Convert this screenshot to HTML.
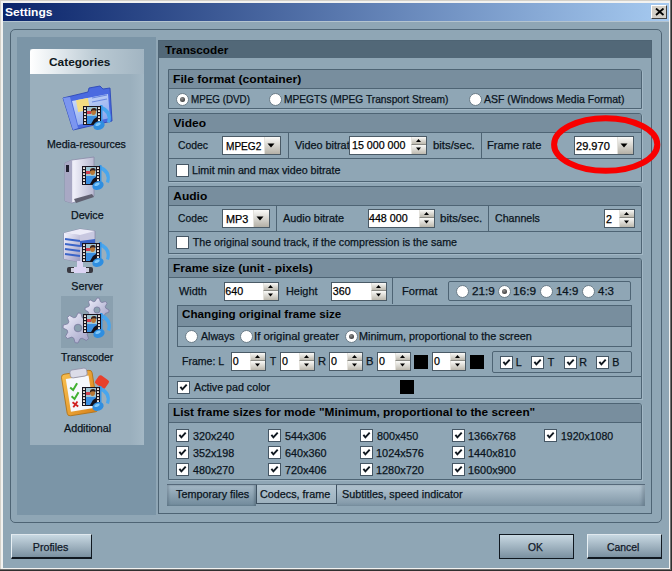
<!DOCTYPE html><html><head><meta charset="utf-8"><style>
*{margin:0;padding:0;box-sizing:border-box}
html,body{width:672px;height:571px;overflow:hidden;background:#d4d0c8}
body{position:relative;font-family:"Liberation Sans", sans-serif}
body div{position:absolute}
.t{white-space:nowrap;line-height:1;transform-origin:0 0}
.cb{width:13px;height:13px;background:#fff;border:1px solid #455664}
.cb svg{position:absolute;left:0;top:0}
.rd{width:13px;height:13px;border-radius:50%;background:#fff;border:1px solid #6a7c88}
.rd .dot{left:3px;top:3px;width:5px;height:5px;border-radius:50%;background:radial-gradient(circle at 40% 35%,#909090,#202020)}
.ed{background:#fff;border:1px solid #4a5a66}
.sp{right:0;width:15px;background:linear-gradient(#fafaf8,#bdb9ae);border-left:1px solid #e4e2dc}
.sp svg{position:absolute;left:0;top:0}
.sp2{border-top:1px solid #8a8a84}
.up{left:3px;top:2px;width:0;height:0;border-left:3px solid transparent;border-right:3px solid transparent;border-bottom:3px solid #000}
.sp .dn{left:3px;top:2px;width:0;height:0;border-left:3px solid transparent;border-right:3px solid transparent;border-top:3px solid #000}
.cbtn{right:0;top:0;bottom:0;width:16px;background:linear-gradient(#fafaf8,#b4b0a6);border-left:1px solid #e4e2dc}
.cbtn svg{position:absolute;left:0;top:0}
.cbtn .dn{left:2px;top:6px;width:0;height:0;border-left:4px solid transparent;border-right:4px solid transparent;border-top:4px solid #000}
.btn{background:linear-gradient(#c8d8e2,#7a90a0);border-left:1px solid #e8f0f4;border-top:1px solid #e0e8ee;border-right:1px solid #101820;border-bottom:2px solid #101820}
</style></head><body><div style="left:0px;top:0px;width:672px;height:571px;background:#303030"></div>
<div style="left:0px;top:0px;width:671px;height:570px;background:#707070"></div>
<div style="left:0px;top:0px;width:670px;height:569px;background:#d4d0c8"></div>
<div style="left:1px;top:1px;width:669px;height:568px;background:#f2f2f0"></div>
<div style="left:3px;top:3px;width:666px;height:18px;background:linear-gradient(90deg,#0a246a,#a6caf0)"></div>
<div class="t" style="left:4.94px;top:6.7px;font-size:12px;font-weight:bold;color:#fff;transform:scale(1.0043,0.900);">Settings</div>
<div style="left:651px;top:5px;width:16px;height:14px;background:#d4d0c8;border-left:1px solid #fff;border-top:1px solid #fff;border-right:1px solid #404040;border-bottom:1px solid #404040"><svg style="position:absolute;left:2.5px;top:2px" width="10" height="8" viewBox="0 0 10 8"><path d="M1 0.5 L8.5 7 M8.5 0.5 L1 7" stroke="#000" stroke-width="1.8"/></svg></div>
<div style="left:3px;top:21px;width:666px;height:547px;background:#8fa6b5"></div>
<div style="left:3px;top:21px;width:666px;height:1px;background:#b4c4d0"></div>
<div style="left:10px;top:29px;width:652px;height:494px;border:1px solid #4e6474;border-radius:5px;background:#8fa6b5"></div>
<div style="left:17px;top:37px;width:139px;height:478px;background:#7b95a7"></div>
<div style="left:30px;top:49px;width:114px;height:396px;background:linear-gradient(90deg,#9aafbd 0%,#9aafbd 88%,#a4b8c5 100%)"></div>
<div style="left:30px;top:49px;width:114px;height:25px;background:linear-gradient(90deg,#ffffff 0%,#e6ecf0 22%,#b8c8d2 60%,#a2b5c2 100%);border-radius:3px 3px 0 0"></div>
<div class="t" style="left:49.02px;top:56px;font-size:11.7px;font-weight:bold;color:#101820;transform:scale(1.0169,1.000);">Categories</div>
<svg style="position:absolute;left:58px;top:80px" width="60" height="54" viewBox="58 80 60 54"><defs><linearGradient id="fg" x1="0" y1="0" x2="1" y2="1"><stop offset="0" stop-color="#9cb8f8"/><stop offset="1" stop-color="#4060d0"/></linearGradient>
    <linearGradient id="sv" x1="0" y1="0" x2="1" y2="0"><stop offset="0" stop-color="#9898b8"/><stop offset="0.3" stop-color="#f0f0fa"/><stop offset="1" stop-color="#b8b8d0"/></linearGradient>
    <linearGradient id="fi" x1="0" y1="0" x2="0.6" y2="1"><stop offset="0" stop-color="#d4e2fa"/><stop offset="1" stop-color="#8aa6ee"/></linearGradient><linearGradient id="or" x1="0" y1="0" x2="1" y2="1"><stop offset="0" stop-color="#f8c050"/><stop offset="1" stop-color="#d88018"/></linearGradient><linearGradient id="gr" x1="0" y1="0" x2="1" y2="1"><stop offset="0" stop-color="#f4f4ff"/><stop offset="1" stop-color="#9a9ac0"/></linearGradient></defs><path d="M63 98 L88 92 L89 88 L100 86 L103 89 L110 88 L112 121 L73 130 Z" fill="#4a6ae0" stroke="#2c48b8" stroke-width="0.9"/><path d="M72 101 L108 94 L110 118 L78 125 Z" fill="url(#fi)"/><rect x="77" y="99" width="12" height="12" fill="#f4dc80" transform="rotate(-10 83 105)"/><path d="M92 98 L107 95 M92 102 L107 99" stroke="#6a88e0" stroke-width="1.2"/><path d="M63 98 L70 97 L78 128 L73 130 Z" fill="#7c96f0"/><path d="M100 105 Q114 110 110 123 L107 122 Q110 113 100 109 Z" fill="#48a6ee"/><rect x="100" y="105" width="2.5" height="19" fill="#3a96e4"/><rect x="83" y="106" width="18" height="19" fill="#181420"/><rect x="87" y="107" width="10" height="9" fill="#9cc4d4"/><rect x="87" y="111" width="4" height="3" fill="#d04050"/><ellipse cx="93.5" cy="111.5" rx="2.6" ry="3.4" fill="#b87838"/><path d="M91 110 q2.5 -3.5 5.5 -1 l0 2 q-3 -1.5 -5.5 0.5z" fill="#302020"/><rect x="87" y="116" width="10" height="8" fill="#3a8ee0"/><path d="M91 124 l3 -5 l3 -2 v7z" fill="#141018"/><rect x="84" y="107.2" width="2" height="1.8" fill="#f0e8e0"/><rect x="98" y="107.2" width="2" height="1.8" fill="#f0e8e0"/><rect x="84" y="110.2" width="2" height="1.8" fill="#f0e8e0"/><rect x="98" y="110.2" width="2" height="1.8" fill="#f0e8e0"/><rect x="84" y="113.2" width="2" height="1.8" fill="#f0e8e0"/><rect x="98" y="113.2" width="2" height="1.8" fill="#f0e8e0"/><rect x="84" y="116.2" width="2" height="1.8" fill="#f0e8e0"/><rect x="98" y="116.2" width="2" height="1.8" fill="#f0e8e0"/><rect x="84" y="119.2" width="2" height="1.8" fill="#f0e8e0"/><rect x="98" y="119.2" width="2" height="1.8" fill="#f0e8e0"/><rect x="84" y="122.2" width="2" height="1.8" fill="#f0e8e0"/><rect x="98" y="122.2" width="2" height="1.8" fill="#f0e8e0"/><ellipse cx="99" cy="125.5" rx="5.8" ry="4.3" fill="#2f8ee0" transform="rotate(-20 99 125.5)"/><ellipse cx="98" cy="124.3" rx="2.8" ry="1.5" fill="#80c8f8" transform="rotate(-20 98 124.3)"/></svg>
<svg style="position:absolute;left:58px;top:152px" width="60" height="56" viewBox="58 152 60 56"><path d="M65 163 L72 160 L94 157 L94 196 L72 203 L65 201 Z" fill="url(#sv)" stroke="#8a8aa8" stroke-width="0.8"/><path d="M65 163 L72 160 L72 203 L65 201 Z" fill="#a8a8c4"/><rect x="66" y="165" width="3" height="7" fill="#202030"/><path d="M74 199 L92 194 L94 197 L76 203 Z" fill="#606070"/><path d="M99 165 Q113 170 109 183 L106 182 Q109 173 99 169 Z" fill="#48a6ee"/><rect x="99" y="165" width="2.5" height="19" fill="#3a96e4"/><rect x="82" y="166" width="18" height="19" fill="#181420"/><rect x="86" y="167" width="10" height="9" fill="#9cc4d4"/><rect x="86" y="171" width="4" height="3" fill="#d04050"/><ellipse cx="92.5" cy="171.5" rx="2.6" ry="3.4" fill="#b87838"/><path d="M90 170 q2.5 -3.5 5.5 -1 l0 2 q-3 -1.5 -5.5 0.5z" fill="#302020"/><rect x="86" y="176" width="10" height="8" fill="#3a8ee0"/><path d="M90 184 l3 -5 l3 -2 v7z" fill="#141018"/><rect x="83" y="167.2" width="2" height="1.8" fill="#f0e8e0"/><rect x="97" y="167.2" width="2" height="1.8" fill="#f0e8e0"/><rect x="83" y="170.2" width="2" height="1.8" fill="#f0e8e0"/><rect x="97" y="170.2" width="2" height="1.8" fill="#f0e8e0"/><rect x="83" y="173.2" width="2" height="1.8" fill="#f0e8e0"/><rect x="97" y="173.2" width="2" height="1.8" fill="#f0e8e0"/><rect x="83" y="176.2" width="2" height="1.8" fill="#f0e8e0"/><rect x="97" y="176.2" width="2" height="1.8" fill="#f0e8e0"/><rect x="83" y="179.2" width="2" height="1.8" fill="#f0e8e0"/><rect x="97" y="179.2" width="2" height="1.8" fill="#f0e8e0"/><rect x="83" y="182.2" width="2" height="1.8" fill="#f0e8e0"/><rect x="97" y="182.2" width="2" height="1.8" fill="#f0e8e0"/><ellipse cx="98" cy="185.5" rx="5.8" ry="4.3" fill="#2f8ee0" transform="rotate(-20 98 185.5)"/><ellipse cx="97" cy="184.3" rx="2.8" ry="1.5" fill="#80c8f8" transform="rotate(-20 97 184.3)"/></svg>
<svg style="position:absolute;left:58px;top:224px" width="60" height="52" viewBox="58 224 60 52"><path d="M64 233 L80 229 L95 231 L95 258 L80 262 L64 259 Z" fill="#c8c8e0" stroke="#8888a8" stroke-width="0.8"/><path d="M64 233 L80 229 L95 231 L80 235 Z" fill="#ececf8"/><path d="M64 233 L80 235 L80 262 L64 259 Z" fill="url(#gr)"/><path d="M65 239 L80 241" stroke="#3a64c8" stroke-width="2.2" fill="none"/><path d="M65 244 L80 246" stroke="#3a64c8" stroke-width="2.2" fill="none"/><path d="M65 249 L80 251" stroke="#3a64c8" stroke-width="2.2" fill="none"/><path d="M65 254 L80 256" stroke="#3a64c8" stroke-width="2.2" fill="none"/><path d="M80 241 L95 239 L95 245 L80 247 Z" fill="#3a64c8"/><rect x="67" y="267" width="26" height="6" rx="2" fill="#383840"/><rect x="71" y="268" width="18" height="4" fill="#d0d0e0"/><path d="M77 261 h6 v6 h3 v6 h-12 v-6 h3 z" fill="#dcd4f4"/><path d="M99 242 Q113 247 109 260 L106 259 Q109 250 99 246 Z" fill="#48a6ee"/><rect x="99" y="242" width="2.5" height="19" fill="#3a96e4"/><rect x="82" y="243" width="18" height="19" fill="#181420"/><rect x="86" y="244" width="10" height="9" fill="#9cc4d4"/><rect x="86" y="248" width="4" height="3" fill="#d04050"/><ellipse cx="92.5" cy="248.5" rx="2.6" ry="3.4" fill="#b87838"/><path d="M90 247 q2.5 -3.5 5.5 -1 l0 2 q-3 -1.5 -5.5 0.5z" fill="#302020"/><rect x="86" y="253" width="10" height="8" fill="#3a8ee0"/><path d="M90 261 l3 -5 l3 -2 v7z" fill="#141018"/><rect x="83" y="244.2" width="2" height="1.8" fill="#f0e8e0"/><rect x="97" y="244.2" width="2" height="1.8" fill="#f0e8e0"/><rect x="83" y="247.2" width="2" height="1.8" fill="#f0e8e0"/><rect x="97" y="247.2" width="2" height="1.8" fill="#f0e8e0"/><rect x="83" y="250.2" width="2" height="1.8" fill="#f0e8e0"/><rect x="97" y="250.2" width="2" height="1.8" fill="#f0e8e0"/><rect x="83" y="253.2" width="2" height="1.8" fill="#f0e8e0"/><rect x="97" y="253.2" width="2" height="1.8" fill="#f0e8e0"/><rect x="83" y="256.2" width="2" height="1.8" fill="#f0e8e0"/><rect x="97" y="256.2" width="2" height="1.8" fill="#f0e8e0"/><rect x="83" y="259.2" width="2" height="1.8" fill="#f0e8e0"/><rect x="97" y="259.2" width="2" height="1.8" fill="#f0e8e0"/><ellipse cx="98" cy="262.5" rx="5.8" ry="4.3" fill="#2f8ee0" transform="rotate(-20 98 262.5)"/><ellipse cx="97" cy="261.3" rx="2.8" ry="1.5" fill="#80c8f8" transform="rotate(-20 97 261.3)"/></svg>
<svg style="position:absolute;left:58px;top:294px" width="58" height="56" viewBox="58 294 58 56"><rect x="61" y="296" width="52" height="52" fill="#8aa0af"/><polygon points="109.0,310.0 108.8,312.3 105.3,313.4 104.5,315.0 105.5,318.5 103.7,320.0 100.4,318.3 98.8,318.8 97.0,322.0 94.7,321.8 93.6,318.3 92.0,317.5 88.5,318.5 87.0,316.7 88.7,313.4 88.2,311.8 85.0,310.0 85.2,307.7 88.7,306.6 89.5,305.0 88.5,301.5 90.3,300.0 93.6,301.7 95.2,301.2 97.0,298.0 99.3,298.2 100.4,301.7 102.0,302.5 105.5,301.5 107.0,303.3 105.3,306.6 105.8,308.2" fill="url(#gr)" stroke="#7a7aa0" stroke-width="0.8"/><circle cx="97" cy="310" r="3.1" fill="#8aa0af" stroke="#7a7aa0" stroke-width="0.8"/><polygon points="93.0,328.0 92.7,330.9 88.2,332.2 87.1,334.1 88.6,338.6 86.3,340.5 82.2,338.2 80.1,338.8 78.0,343.0 75.1,342.7 73.8,338.2 71.9,337.1 67.4,338.6 65.5,336.3 67.8,332.2 67.2,330.1 63.0,328.0 63.3,325.1 67.8,323.8 68.9,321.9 67.4,317.4 69.7,315.5 73.8,317.8 75.9,317.2 78.0,313.0 80.9,313.3 82.2,317.8 84.1,318.9 88.6,317.4 90.5,319.7 88.2,323.8 88.8,325.9" fill="url(#gr)" stroke="#7a7aa0" stroke-width="0.8"/><circle cx="78" cy="328" r="3.8" fill="#8aa0af" stroke="#7a7aa0" stroke-width="0.8"/><path d="M100 313 Q114 318 110 331 L107 330 Q110 321 100 317 Z" fill="#48a6ee"/><rect x="100" y="313" width="2.5" height="19" fill="#3a96e4"/><rect x="83" y="314" width="18" height="19" fill="#181420"/><rect x="87" y="315" width="10" height="9" fill="#9cc4d4"/><rect x="87" y="319" width="4" height="3" fill="#d04050"/><ellipse cx="93.5" cy="319.5" rx="2.6" ry="3.4" fill="#b87838"/><path d="M91 318 q2.5 -3.5 5.5 -1 l0 2 q-3 -1.5 -5.5 0.5z" fill="#302020"/><rect x="87" y="324" width="10" height="8" fill="#3a8ee0"/><path d="M91 332 l3 -5 l3 -2 v7z" fill="#141018"/><rect x="84" y="315.2" width="2" height="1.8" fill="#f0e8e0"/><rect x="98" y="315.2" width="2" height="1.8" fill="#f0e8e0"/><rect x="84" y="318.2" width="2" height="1.8" fill="#f0e8e0"/><rect x="98" y="318.2" width="2" height="1.8" fill="#f0e8e0"/><rect x="84" y="321.2" width="2" height="1.8" fill="#f0e8e0"/><rect x="98" y="321.2" width="2" height="1.8" fill="#f0e8e0"/><rect x="84" y="324.2" width="2" height="1.8" fill="#f0e8e0"/><rect x="98" y="324.2" width="2" height="1.8" fill="#f0e8e0"/><rect x="84" y="327.2" width="2" height="1.8" fill="#f0e8e0"/><rect x="98" y="327.2" width="2" height="1.8" fill="#f0e8e0"/><rect x="84" y="330.2" width="2" height="1.8" fill="#f0e8e0"/><rect x="98" y="330.2" width="2" height="1.8" fill="#f0e8e0"/><ellipse cx="99" cy="333.5" rx="5.8" ry="4.3" fill="#2f8ee0" transform="rotate(-20 99 333.5)"/><ellipse cx="98" cy="332.3" rx="2.8" ry="1.5" fill="#80c8f8" transform="rotate(-20 98 332.3)"/></svg>
<svg style="position:absolute;left:58px;top:364px" width="58" height="56" viewBox="58 364 58 56"><g transform="rotate(-9 80 392)"><rect x="64" y="372" width="31" height="42" rx="3" fill="url(#or)" stroke="#b07010" stroke-width="0.8"/><rect x="68" y="377" width="23" height="33" fill="#f6f8fc"/><rect x="73" y="369" width="17" height="8" rx="2.5" fill="#dcdce8" stroke="#9090a8" stroke-width="0.8"/><path d="M71 386 l2.5 3 l5 -6 M71 395 l2.5 3 l5 -6" stroke="#40b030" stroke-width="2" fill="none"/><path d="M71 401 l5 5 M76 401 l-5 5" stroke="#d02020" stroke-width="1.8"/></g><rect x="96" y="377" width="12" height="10" rx="2" fill="#e8402c" transform="rotate(35 102 382)"/><path d="M99 386 Q113 391 109 404 L106 403 Q109 394 99 390 Z" fill="#48a6ee"/><rect x="99" y="386" width="2.5" height="19" fill="#3a96e4"/><rect x="82" y="387" width="18" height="19" fill="#181420"/><rect x="86" y="388" width="10" height="9" fill="#9cc4d4"/><rect x="86" y="392" width="4" height="3" fill="#d04050"/><ellipse cx="92.5" cy="392.5" rx="2.6" ry="3.4" fill="#b87838"/><path d="M90 391 q2.5 -3.5 5.5 -1 l0 2 q-3 -1.5 -5.5 0.5z" fill="#302020"/><rect x="86" y="397" width="10" height="8" fill="#3a8ee0"/><path d="M90 405 l3 -5 l3 -2 v7z" fill="#141018"/><rect x="83" y="388.2" width="2" height="1.8" fill="#f0e8e0"/><rect x="97" y="388.2" width="2" height="1.8" fill="#f0e8e0"/><rect x="83" y="391.2" width="2" height="1.8" fill="#f0e8e0"/><rect x="97" y="391.2" width="2" height="1.8" fill="#f0e8e0"/><rect x="83" y="394.2" width="2" height="1.8" fill="#f0e8e0"/><rect x="97" y="394.2" width="2" height="1.8" fill="#f0e8e0"/><rect x="83" y="397.2" width="2" height="1.8" fill="#f0e8e0"/><rect x="97" y="397.2" width="2" height="1.8" fill="#f0e8e0"/><rect x="83" y="400.2" width="2" height="1.8" fill="#f0e8e0"/><rect x="97" y="400.2" width="2" height="1.8" fill="#f0e8e0"/><rect x="83" y="403.2" width="2" height="1.8" fill="#f0e8e0"/><rect x="97" y="403.2" width="2" height="1.8" fill="#f0e8e0"/><ellipse cx="98" cy="406.5" rx="5.8" ry="4.3" fill="#2f8ee0" transform="rotate(-20 98 406.5)"/><ellipse cx="97" cy="405.3" rx="2.8" ry="1.5" fill="#80c8f8" transform="rotate(-20 97 405.3)"/></svg>
<div class="t" style="left:47.15px;top:139px;font-size:10.7px;font-weight:normal;color:#0a1420;transform:scale(0.9913,1.000);-webkit-text-stroke:0.25px currentColor;">Media-resources</div>
<div class="t" style="left:70.94px;top:210px;font-size:10.7px;font-weight:normal;color:#0a1420;-webkit-text-stroke:0.25px currentColor;">Device</div>
<div class="t" style="left:71.32px;top:281px;font-size:10.7px;font-weight:normal;color:#0a1420;-webkit-text-stroke:0.25px currentColor;">Server</div>
<div class="t" style="left:60.99px;top:352px;font-size:10.7px;font-weight:normal;color:#0a1420;transform:scale(0.9749,1.000);-webkit-text-stroke:0.25px currentColor;">Transcoder</div>
<div class="t" style="left:64.00px;top:423px;font-size:10.7px;font-weight:normal;color:#0a1420;transform:scale(1.0048,1.000);-webkit-text-stroke:0.25px currentColor;">Additional</div>
<div style="left:158px;top:40px;width:494px;height:474px;border:1px solid #4e6474;background:#8fa6b5"></div>
<div style="left:159px;top:41px;width:492px;height:17px;background:#526878"></div>
<div class="t" style="left:164.58px;top:44.5px;font-size:12px;font-weight:bold;color:#000;transform:scale(0.9786,0.914);">Transcoder</div>
<div style="left:168px;top:69px;width:474px;height:40px;border:1px solid #4e6474;background:#8fa6b5;border-top-right-radius:3px;box-shadow:1px 1px 0 rgba(190,210,222,0.4)"></div>
<div style="left:169px;top:70px;width:472px;height:18px;background:#788e9e;border-top-right-radius:2px"></div>
<div style="left:169px;top:88px;width:472px;height:1px;background:#4e6474"></div>
<div class="t" style="left:172.81px;top:73.7px;font-size:12px;font-weight:bold;color:#000;transform:scale(1.0124,0.914);">File format (container)</div>
<div class="rd" style="left:176px;top:93px"><div class="dot"></div></div>
<div class="t" style="left:190.91px;top:94px;font-size:10.7px;font-weight:normal;color:#0a1420;transform:scale(0.9194,1.000);-webkit-text-stroke:0.25px currentColor;">MPEG (DVD)</div>
<div class="rd" style="left:269px;top:93px"></div>
<div class="t" style="left:284.18px;top:94px;font-size:10.7px;font-weight:normal;color:#0a1420;transform:scale(0.9539,1.000);-webkit-text-stroke:0.25px currentColor;">MPEGTS (MPEG Transport Stream)</div>
<div class="rd" style="left:469px;top:93px"></div>
<div class="t" style="left:484.00px;top:94px;font-size:10.7px;font-weight:normal;color:#0a1420;transform:scale(0.9816,1.000);-webkit-text-stroke:0.25px currentColor;">ASF (Windows Media Format)</div>
<div style="left:168px;top:113px;width:474px;height:69px;border:1px solid #4e6474;background:#8fa6b5;border-top-right-radius:3px;box-shadow:1px 1px 0 rgba(190,210,222,0.4)"></div>
<div style="left:169px;top:114px;width:472px;height:18px;background:#788e9e;border-top-right-radius:2px"></div>
<div style="left:169px;top:132px;width:472px;height:1px;background:#4e6474"></div>
<div class="t" style="left:173.54px;top:117.7px;font-size:12px;font-weight:bold;color:#000;transform:scale(1.0000,0.914);">Video</div>
<div style="left:169px;top:158px;width:472px;height:1px;background:#4e6474"></div>
<div class="t" style="left:177.78px;top:140px;font-size:10.7px;font-weight:normal;color:#0a1420;transform:scale(0.9728,1.000);-webkit-text-stroke:0.25px currentColor;">Codec</div>
<div class="t" style="left:294.85px;top:140px;font-size:10.7px;font-weight:normal;color:#0a1420;transform:scale(1.0145,1.000);-webkit-text-stroke:0.25px currentColor;">Video bitrat</div>
<div class="ed" style="left:222px;top:136px;width:59px;height:19px"><div class="cbtn"><svg width="15" height="17"><polygon points="2.5,6.5 9.5,6.5 6,10.5" fill="#000"/></svg></div></div>
<div class="t" style="left:225.99px;top:141px;font-size:10.7px;font-weight:normal;color:#000;transform:scale(0.9429,1.000);-webkit-text-stroke:0.25px currentColor;">MPEG2</div>
<div style="left:288px;top:133px;width:1px;height:25px;background:#4e6474"></div>
<div class="ed" style="left:349px;top:136px;width:78px;height:19px"><div class="sp" style="height:7px;top:0"><svg width="14" height="8"><polygon points="4,5.1 9,5.1 6.5,2.1" fill="#000"/></svg></div><div class="sp sp2" style="height:10px;top:7px"><svg width="14" height="9"><polygon points="4,2.6 9,2.6 6.5,5.6" fill="#000"/></svg></div></div>
<div class="t" style="left:351.50px;top:140.3px;font-size:10.7px;font-weight:normal;color:#000;transform:scale(0.9966,1.000);-webkit-text-stroke:0.25px currentColor;">15 000 000</div>
<div class="t" style="left:432.56px;top:140px;font-size:10.7px;font-weight:normal;color:#0a1420;transform:scale(1.0650,1.000);-webkit-text-stroke:0.25px currentColor;">bits/sec.</div>
<div style="left:481px;top:133px;width:1px;height:25px;background:#4e6474"></div>
<div class="t" style="left:486.71px;top:140px;font-size:10.7px;font-weight:normal;color:#0a1420;transform:scale(1.0404,1.000);-webkit-text-stroke:0.25px currentColor;">Frame rate</div>
<div class="ed" style="left:574px;top:136px;width:60px;height:19px"><div class="cbtn"><svg width="15" height="17"><polygon points="2.5,6.5 9.5,6.5 6,10.5" fill="#000"/></svg></div></div>
<div class="t" style="left:575.55px;top:141px;font-size:10.7px;font-weight:normal;color:#000;transform:scale(1.0335,1.000);-webkit-text-stroke:0.25px currentColor;">29.970</div>
<div class="cb" style="left:176px;top:164px"></div>
<div class="t" style="left:191.84px;top:165px;font-size:10.7px;font-weight:normal;color:#0a1420;transform:scale(1.0034,1.000);-webkit-text-stroke:0.25px currentColor;">Limit min and max video bitrate</div>
<div style="left:168px;top:186px;width:474px;height:68px;border:1px solid #4e6474;background:#8fa6b5;border-top-right-radius:3px;box-shadow:1px 1px 0 rgba(190,210,222,0.4)"></div>
<div style="left:169px;top:187px;width:472px;height:18px;background:#788e9e;border-top-right-radius:2px"></div>
<div style="left:169px;top:205px;width:472px;height:1px;background:#4e6474"></div>
<div class="t" style="left:173.30px;top:190.7px;font-size:12px;font-weight:bold;color:#000;transform:scale(1.0000,0.914);">Audio</div>
<div style="left:169px;top:231px;width:472px;height:1px;background:#4e6474"></div>
<div class="t" style="left:177.78px;top:213px;font-size:10.7px;font-weight:normal;color:#0a1420;transform:scale(0.9628,1.000);-webkit-text-stroke:0.25px currentColor;">Codec</div>
<div class="ed" style="left:222px;top:209px;width:48px;height:19px"><div class="cbtn"><svg width="15" height="17"><polygon points="2.5,6.5 9.5,6.5 6,10.5" fill="#000"/></svg></div></div>
<div class="t" style="left:226.43px;top:214px;font-size:10.7px;font-weight:normal;color:#000;transform:scale(1.0143,1.000);-webkit-text-stroke:0.25px currentColor;">MP3</div>
<div style="left:276px;top:206px;width:1px;height:25px;background:#4e6474"></div>
<div class="t" style="left:283.30px;top:213px;font-size:10.7px;font-weight:normal;color:#0a1420;transform:scale(1.0176,1.000);-webkit-text-stroke:0.25px currentColor;">Audio bitrate</div>
<div class="ed" style="left:368px;top:209px;width:67px;height:19px"><div class="sp" style="height:7px;top:0"><svg width="14" height="8"><polygon points="4,5.1 9,5.1 6.5,2.1" fill="#000"/></svg></div><div class="sp sp2" style="height:10px;top:7px"><svg width="14" height="9"><polygon points="4,2.6 9,2.6 6.5,5.6" fill="#000"/></svg></div></div>
<div class="t" style="left:368.99px;top:213.3px;font-size:10.7px;font-weight:normal;color:#000;-webkit-text-stroke:0.25px currentColor;">448 000</div>
<div class="t" style="left:439.75px;top:213px;font-size:10.7px;font-weight:normal;color:#0a1420;transform:scale(1.0757,1.000);-webkit-text-stroke:0.25px currentColor;">bits/sec.</div>
<div style="left:488px;top:206px;width:1px;height:25px;background:#4e6474"></div>
<div class="t" style="left:495.27px;top:213px;font-size:10.7px;font-weight:normal;color:#0a1420;transform:scale(0.9933,1.000);-webkit-text-stroke:0.25px currentColor;">Channels</div>
<div class="ed" style="left:604px;top:209px;width:31px;height:19px"><div class="sp" style="height:7px;top:0"><svg width="14" height="8"><polygon points="4,5.1 9,5.1 6.5,2.1" fill="#000"/></svg></div><div class="sp sp2" style="height:10px;top:7px"><svg width="14" height="9"><polygon points="4,2.6 9,2.6 6.5,5.6" fill="#000"/></svg></div></div>
<div class="t" style="left:605.97px;top:214px;font-size:10.7px;font-weight:normal;color:#000;-webkit-text-stroke:0.25px currentColor;">2</div>
<div class="cb" style="left:176px;top:236px"></div>
<div class="t" style="left:192.69px;top:237px;font-size:10.7px;font-weight:normal;color:#0a1420;-webkit-text-stroke:0.25px currentColor;">The original sound track, if the compression is the same</div>
<div style="left:168px;top:258px;width:474px;height:141px;border:1px solid #4e6474;background:#8fa6b5;border-top-right-radius:3px;box-shadow:1px 1px 0 rgba(190,210,222,0.4)"></div>
<div style="left:169px;top:259px;width:472px;height:18px;background:#788e9e;border-top-right-radius:2px"></div>
<div style="left:169px;top:277px;width:472px;height:1px;background:#4e6474"></div>
<div class="t" style="left:172.82px;top:262.7px;font-size:12px;font-weight:bold;color:#000;transform:scale(0.9981,0.914);">Frame size (unit - pixels)</div>
<div class="t" style="left:178.95px;top:286px;font-size:10.7px;font-weight:normal;color:#0a1420;transform:scale(1.0154,1.000);-webkit-text-stroke:0.25px currentColor;">Width</div>
<div class="ed" style="left:224px;top:282px;width:55px;height:19px"><div class="sp" style="height:7px;top:0"><svg width="14" height="8"><polygon points="4,5.1 9,5.1 6.5,2.1" fill="#000"/></svg></div><div class="sp sp2" style="height:10px;top:7px"><svg width="14" height="9"><polygon points="4,2.6 9,2.6 6.5,5.6" fill="#000"/></svg></div></div>
<div class="t" style="left:225.27px;top:286px;font-size:10.7px;font-weight:normal;color:#000;-webkit-text-stroke:0.25px currentColor;">640</div>
<div class="t" style="left:285.83px;top:286px;font-size:10.7px;font-weight:normal;color:#0a1420;transform:scale(1.0195,1.000);-webkit-text-stroke:0.25px currentColor;">Height</div>
<div class="ed" style="left:331px;top:282px;width:56px;height:19px"><div class="sp" style="height:7px;top:0"><svg width="14" height="8"><polygon points="4,5.1 9,5.1 6.5,2.1" fill="#000"/></svg></div><div class="sp sp2" style="height:10px;top:7px"><svg width="14" height="9"><polygon points="4,2.6 9,2.6 6.5,5.6" fill="#000"/></svg></div></div>
<div class="t" style="left:332.87px;top:286px;font-size:10.7px;font-weight:normal;color:#000;-webkit-text-stroke:0.25px currentColor;">360</div>
<div style="left:392px;top:278px;width:1px;height:26px;background:#4e6474"></div>
<div class="t" style="left:401.51px;top:286px;font-size:10.7px;font-weight:normal;color:#0a1420;transform:scale(1.0408,1.000);-webkit-text-stroke:0.25px currentColor;">Format</div>
<div style="left:448px;top:281px;width:183px;height:20px;border:1px solid #4e6474;border-radius:2px"></div>
<div class="rd" style="left:456px;top:285px"></div>
<div class="t" style="left:471.51px;top:286px;font-size:10.7px;font-weight:normal;color:#0a1420;transform:scale(1.0962,1.000);-webkit-text-stroke:0.25px currentColor;">21:9</div>
<div class="rd" style="left:498px;top:285px"><div class="dot"></div></div>
<div class="t" style="left:513.11px;top:286px;font-size:10.7px;font-weight:normal;color:#0a1420;transform:scale(1.1113,1.000);-webkit-text-stroke:0.25px currentColor;">16:9</div>
<div class="rd" style="left:540px;top:285px"></div>
<div class="t" style="left:555.84px;top:286px;font-size:10.7px;font-weight:normal;color:#0a1420;transform:scale(1.0703,1.000);-webkit-text-stroke:0.25px currentColor;">14:9</div>
<div class="rd" style="left:582px;top:285px"></div>
<div class="t" style="left:597.77px;top:286px;font-size:10.7px;font-weight:normal;color:#0a1420;transform:scale(1.0751,1.000);-webkit-text-stroke:0.25px currentColor;">4:3</div>
<div style="left:177px;top:305px;width:455px;height:42px;border:1px solid #4e6474"></div>
<div style="left:178px;top:306px;width:453px;height:20px;background:#788e9e"></div>
<div style="left:178px;top:326px;width:453px;height:1px;background:#4e6474"></div>
<div class="t" style="left:182.03px;top:309.2px;font-size:12px;font-weight:bold;color:#000;transform:scale(0.9712,0.914);">Changing original frame size</div>
<div class="rd" style="left:185px;top:330px"></div>
<div class="t" style="left:201.00px;top:331px;font-size:10.7px;font-weight:normal;color:#0a1420;transform:scale(0.9927,1.000);-webkit-text-stroke:0.25px currentColor;">Always</div>
<div class="rd" style="left:240px;top:330px"></div>
<div class="t" style="left:254.28px;top:331px;font-size:10.7px;font-weight:normal;color:#0a1420;transform:scale(1.0616,1.000);-webkit-text-stroke:0.25px currentColor;">If original greater</div>
<div class="rd" style="left:345px;top:330px"><div class="dot"></div></div>
<div class="t" style="left:359.43px;top:331px;font-size:10.7px;font-weight:normal;color:#0a1420;transform:scale(1.0135,1.000);-webkit-text-stroke:0.25px currentColor;">Minimum, proportional to the screen</div>
<div class="t" style="left:181.86px;top:356px;font-size:10.7px;font-weight:normal;color:#0a1420;transform:scale(0.9850,1.000);-webkit-text-stroke:0.25px currentColor;">Frame: L</div>
<div class="ed" style="left:231px;top:352px;width:35px;height:19px"><div class="sp" style="height:7px;top:0"><svg width="14" height="8"><polygon points="4,5.1 9,5.1 6.5,2.1" fill="#000"/></svg></div><div class="sp sp2" style="height:10px;top:7px"><svg width="14" height="9"><polygon points="4,2.6 9,2.6 6.5,5.6" fill="#000"/></svg></div></div>
<div class="t" style="left:232.87px;top:356px;font-size:10.7px;font-weight:normal;color:#000;-webkit-text-stroke:0.25px currentColor;">0</div>
<div class="t" style="left:270.10px;top:356px;font-size:10.7px;font-weight:normal;color:#0a1420;transform:scale(0.9346,1.000);-webkit-text-stroke:0.25px currentColor;">T</div>
<div class="ed" style="left:280px;top:352px;width:35px;height:19px"><div class="sp" style="height:7px;top:0"><svg width="14" height="8"><polygon points="4,5.1 9,5.1 6.5,2.1" fill="#000"/></svg></div><div class="sp sp2" style="height:10px;top:7px"><svg width="14" height="9"><polygon points="4,2.6 9,2.6 6.5,5.6" fill="#000"/></svg></div></div>
<div class="t" style="left:282.07px;top:356px;font-size:10.7px;font-weight:normal;color:#000;-webkit-text-stroke:0.25px currentColor;">0</div>
<div class="t" style="left:317.81px;top:356px;font-size:10.7px;font-weight:normal;color:#0a1420;transform:scale(1.0367,1.000);-webkit-text-stroke:0.25px currentColor;">R</div>
<div class="ed" style="left:329px;top:352px;width:34px;height:19px"><div class="sp" style="height:7px;top:0"><svg width="14" height="8"><polygon points="4,5.1 9,5.1 6.5,2.1" fill="#000"/></svg></div><div class="sp sp2" style="height:10px;top:7px"><svg width="14" height="9"><polygon points="4,2.6 9,2.6 6.5,5.6" fill="#000"/></svg></div></div>
<div class="t" style="left:331.07px;top:356px;font-size:10.7px;font-weight:normal;color:#000;-webkit-text-stroke:0.25px currentColor;">0</div>
<div class="t" style="left:365.80px;top:356px;font-size:10.7px;font-weight:normal;color:#0a1420;transform:scale(1.0481,1.000);-webkit-text-stroke:0.25px currentColor;">B</div>
<div class="ed" style="left:377px;top:352px;width:34px;height:19px"><div class="sp" style="height:7px;top:0"><svg width="14" height="8"><polygon points="4,5.1 9,5.1 6.5,2.1" fill="#000"/></svg></div><div class="sp sp2" style="height:10px;top:7px"><svg width="14" height="9"><polygon points="4,2.6 9,2.6 6.5,5.6" fill="#000"/></svg></div></div>
<div class="t" style="left:379.07px;top:356px;font-size:10.7px;font-weight:normal;color:#000;-webkit-text-stroke:0.25px currentColor;">0</div>
<div style="left:414px;top:355px;width:14px;height:14px;background:#000"></div>
<div class="ed" style="left:432px;top:352px;width:34px;height:19px"><div class="sp" style="height:7px;top:0"><svg width="14" height="8"><polygon points="4,5.1 9,5.1 6.5,2.1" fill="#000"/></svg></div><div class="sp sp2" style="height:10px;top:7px"><svg width="14" height="9"><polygon points="4,2.6 9,2.6 6.5,5.6" fill="#000"/></svg></div></div>
<div class="t" style="left:434.07px;top:356px;font-size:10.7px;font-weight:normal;color:#000;-webkit-text-stroke:0.25px currentColor;">0</div>
<div style="left:470px;top:355px;width:14px;height:14px;background:#000"></div>
<div style="left:492px;top:351px;width:140px;height:22px;border:1px solid #4e6474;border-radius:2px"></div>
<div class="cb" style="left:500px;top:356px"><svg width="11" height="11" viewBox="0 0 11 11"><path d="M2.4 4.9 L4.4 7.4 L8.7 2.7" stroke="#101820" stroke-width="1.9" fill="none"/></svg></div>
<div class="t" style="left:515.74px;top:357px;font-size:10.7px;font-weight:normal;color:#0a1420;-webkit-text-stroke:0.25px currentColor;">L</div>
<div class="cb" style="left:531px;top:356px"><svg width="11" height="11" viewBox="0 0 11 11"><path d="M2.4 4.9 L4.4 7.4 L8.7 2.7" stroke="#101820" stroke-width="1.9" fill="none"/></svg></div>
<div class="t" style="left:547.79px;top:357px;font-size:10.7px;font-weight:normal;color:#0a1420;-webkit-text-stroke:0.25px currentColor;">T</div>
<div class="cb" style="left:564px;top:356px"><svg width="11" height="11" viewBox="0 0 11 11"><path d="M2.4 4.9 L4.4 7.4 L8.7 2.7" stroke="#101820" stroke-width="1.9" fill="none"/></svg></div>
<div class="t" style="left:579.14px;top:357px;font-size:10.7px;font-weight:normal;color:#0a1420;-webkit-text-stroke:0.25px currentColor;">R</div>
<div class="cb" style="left:596px;top:356px"><svg width="11" height="11" viewBox="0 0 11 11"><path d="M2.4 4.9 L4.4 7.4 L8.7 2.7" stroke="#101820" stroke-width="1.9" fill="none"/></svg></div>
<div class="t" style="left:612.14px;top:357px;font-size:10.7px;font-weight:normal;color:#0a1420;-webkit-text-stroke:0.25px currentColor;">B</div>
<div style="left:169px;top:376px;width:472px;height:1px;background:#4e6474"></div>
<div class="cb" style="left:177px;top:381px"><svg width="11" height="11" viewBox="0 0 11 11"><path d="M2.4 4.9 L4.4 7.4 L8.7 2.7" stroke="#101820" stroke-width="1.9" fill="none"/></svg></div>
<div class="t" style="left:194.00px;top:382px;font-size:10.7px;font-weight:normal;color:#0a1420;-webkit-text-stroke:0.25px currentColor;">Active pad color</div>
<div style="left:400px;top:380px;width:14px;height:14px;background:#000"></div>
<div style="left:168px;top:403px;width:474px;height:77px;border:1px solid #4e6474;background:#8fa6b5;border-top-right-radius:3px;box-shadow:1px 1px 0 rgba(190,210,222,0.4)"></div>
<div style="left:169px;top:404px;width:472px;height:18px;background:#788e9e;border-top-right-radius:2px"></div>
<div style="left:169px;top:422px;width:472px;height:1px;background:#4e6474"></div>
<div class="t" style="left:172.93px;top:407.4px;font-size:12px;font-weight:bold;color:#000;transform:scale(0.9858,0.914);">List frame sizes for mode &quot;Minimum, proportional to the screen&quot;</div>
<div class="cb" style="left:176px;top:429px"><svg width="11" height="11" viewBox="0 0 11 11"><path d="M2.4 4.9 L4.4 7.4 L8.7 2.7" stroke="#101820" stroke-width="1.9" fill="none"/></svg></div>
<div class="t" style="left:192.87px;top:431px;font-size:10.7px;font-weight:normal;color:#0a1420;transform:scale(1.0067,1.000);-webkit-text-stroke:0.25px currentColor;">320x240</div>
<div class="cb" style="left:176px;top:446px"><svg width="11" height="11" viewBox="0 0 11 11"><path d="M2.4 4.9 L4.4 7.4 L8.7 2.7" stroke="#101820" stroke-width="1.9" fill="none"/></svg></div>
<div class="t" style="left:192.87px;top:448px;font-size:10.7px;font-weight:normal;color:#0a1420;transform:scale(1.0080,1.000);-webkit-text-stroke:0.25px currentColor;">352x198</div>
<div class="cb" style="left:176px;top:463px"><svg width="11" height="11" viewBox="0 0 11 11"><path d="M2.4 4.9 L4.4 7.4 L8.7 2.7" stroke="#101820" stroke-width="1.9" fill="none"/></svg></div>
<div class="t" style="left:193.09px;top:465px;font-size:10.7px;font-weight:normal;color:#0a1420;-webkit-text-stroke:0.25px currentColor;">480x270</div>
<div class="cb" style="left:268px;top:429px"><svg width="11" height="11" viewBox="0 0 11 11"><path d="M2.4 4.9 L4.4 7.4 L8.7 2.7" stroke="#101820" stroke-width="1.9" fill="none"/></svg></div>
<div class="t" style="left:284.87px;top:431px;font-size:10.7px;font-weight:normal;color:#0a1420;transform:scale(1.0080,1.000);-webkit-text-stroke:0.25px currentColor;">544x306</div>
<div class="cb" style="left:268px;top:446px"><svg width="11" height="11" viewBox="0 0 11 11"><path d="M2.4 4.9 L4.4 7.4 L8.7 2.7" stroke="#101820" stroke-width="1.9" fill="none"/></svg></div>
<div class="t" style="left:284.76px;top:448px;font-size:10.7px;font-weight:normal;color:#0a1420;transform:scale(1.0093,1.000);-webkit-text-stroke:0.25px currentColor;">640x360</div>
<div class="cb" style="left:268px;top:463px"><svg width="11" height="11" viewBox="0 0 11 11"><path d="M2.4 4.9 L4.4 7.4 L8.7 2.7" stroke="#101820" stroke-width="1.9" fill="none"/></svg></div>
<div class="t" style="left:284.76px;top:465px;font-size:10.7px;font-weight:normal;color:#0a1420;transform:scale(1.0107,1.000);-webkit-text-stroke:0.25px currentColor;">720x406</div>
<div class="cb" style="left:360px;top:429px"><svg width="11" height="11" viewBox="0 0 11 11"><path d="M2.4 4.9 L4.4 7.4 L8.7 2.7" stroke="#101820" stroke-width="1.9" fill="none"/></svg></div>
<div class="t" style="left:376.81px;top:431px;font-size:10.7px;font-weight:normal;color:#0a1420;transform:scale(1.0080,1.000);-webkit-text-stroke:0.25px currentColor;">800x450</div>
<div class="cb" style="left:360px;top:446px"><svg width="11" height="11" viewBox="0 0 11 11"><path d="M2.4 4.9 L4.4 7.4 L8.7 2.7" stroke="#101820" stroke-width="1.9" fill="none"/></svg></div>
<div class="t" style="left:376.48px;top:448px;font-size:10.7px;font-weight:normal;color:#0a1420;transform:scale(1.0209,1.000);-webkit-text-stroke:0.25px currentColor;">1024x576</div>
<div class="cb" style="left:360px;top:463px"><svg width="11" height="11" viewBox="0 0 11 11"><path d="M2.4 4.9 L4.4 7.4 L8.7 2.7" stroke="#101820" stroke-width="1.9" fill="none"/></svg></div>
<div class="t" style="left:376.48px;top:465px;font-size:10.7px;font-weight:normal;color:#0a1420;transform:scale(1.0197,1.000);-webkit-text-stroke:0.25px currentColor;">1280x720</div>
<div class="cb" style="left:452px;top:429px"><svg width="11" height="11" viewBox="0 0 11 11"><path d="M2.4 4.9 L4.4 7.4 L8.7 2.7" stroke="#101820" stroke-width="1.9" fill="none"/></svg></div>
<div class="t" style="left:468.48px;top:431px;font-size:10.7px;font-weight:normal;color:#0a1420;transform:scale(1.0209,1.000);-webkit-text-stroke:0.25px currentColor;">1366x768</div>
<div class="cb" style="left:452px;top:446px"><svg width="11" height="11" viewBox="0 0 11 11"><path d="M2.4 4.9 L4.4 7.4 L8.7 2.7" stroke="#101820" stroke-width="1.9" fill="none"/></svg></div>
<div class="t" style="left:468.48px;top:448px;font-size:10.7px;font-weight:normal;color:#0a1420;transform:scale(1.0197,1.000);-webkit-text-stroke:0.25px currentColor;">1440x810</div>
<div class="cb" style="left:452px;top:463px"><svg width="11" height="11" viewBox="0 0 11 11"><path d="M2.4 4.9 L4.4 7.4 L8.7 2.7" stroke="#101820" stroke-width="1.9" fill="none"/></svg></div>
<div class="t" style="left:468.48px;top:465px;font-size:10.7px;font-weight:normal;color:#0a1420;transform:scale(1.0197,1.000);-webkit-text-stroke:0.25px currentColor;">1600x900</div>
<div class="cb" style="left:544px;top:429px"><svg width="11" height="11" viewBox="0 0 11 11"><path d="M2.4 4.9 L4.4 7.4 L8.7 2.7" stroke="#101820" stroke-width="1.9" fill="none"/></svg></div>
<div class="t" style="left:560.51px;top:431px;font-size:10.7px;font-weight:normal;color:#0a1420;transform:scale(0.9848,1.000);-webkit-text-stroke:0.25px currentColor;">1920x1080</div>
<div style="left:167px;top:484px;width:89px;height:22px;background:linear-gradient(#a4b8c6,#70899a);border-top:1px solid #56697a;box-shadow:inset -2px 0 2px rgba(60,80,95,0.35),inset 2px 0 2px rgba(60,80,95,0.25)"></div>
<div class="t" style="left:175.78px;top:489px;font-size:10.7px;font-weight:normal;color:#0a1420;transform:scale(1.0110,1.000);-webkit-text-stroke:0.25px currentColor;">Temporary files</div>
<div style="left:256px;top:484px;width:81px;height:20px;background:linear-gradient(#b2c4d0,#9db1be);border:1px solid #3d5060;border-top-color:#6a7e8c"></div>
<div class="t" style="left:260.16px;top:489px;font-size:10.7px;font-weight:normal;color:#0a1420;transform:scale(1.0104,1.000);-webkit-text-stroke:0.25px currentColor;">Codecs, frame</div>
<div style="left:337px;top:484px;width:308px;height:22px;background:linear-gradient(#b4c6d2,#7f95a5);border-top:1px solid #56697a;box-shadow:inset -3px 0 3px rgba(60,80,95,0.3)"></div>
<div class="t" style="left:341.51px;top:489px;font-size:10.7px;font-weight:normal;color:#0a1420;transform:scale(1.0094,1.000);-webkit-text-stroke:0.25px currentColor;">Subtitles, speed indicator</div>
<div class="btn" style="left:11px;top:534px;width:81px;height:25px"></div>
<div class="t" style="left:32.75px;top:542px;font-size:10.7px;font-weight:normal;color:#101828;-webkit-text-stroke:0.25px currentColor;">Profiles</div>
<div class="btn" style="left:499px;top:534px;width:75px;height:25px;border:1px solid #101820"></div>
<div class="t" style="left:528.04px;top:541.8px;font-size:10.7px;font-weight:normal;color:#101828;transform:scale(0.9615,1.000);-webkit-text-stroke:0.25px currentColor;">OK</div>
<div class="btn" style="left:587px;top:534px;width:75px;height:25px"></div>
<div class="t" style="left:607.28px;top:541.8px;font-size:10.7px;font-weight:normal;color:#101828;transform:scale(0.9736,1.000);-webkit-text-stroke:0.25px currentColor;">Cancel</div>
<svg style="position:absolute;left:0;top:0" width="672" height="571"><ellipse cx="605.7" cy="144.5" rx="51.6" ry="26.3" fill="none" stroke="#f80000" stroke-width="6"/></svg></body></html>
